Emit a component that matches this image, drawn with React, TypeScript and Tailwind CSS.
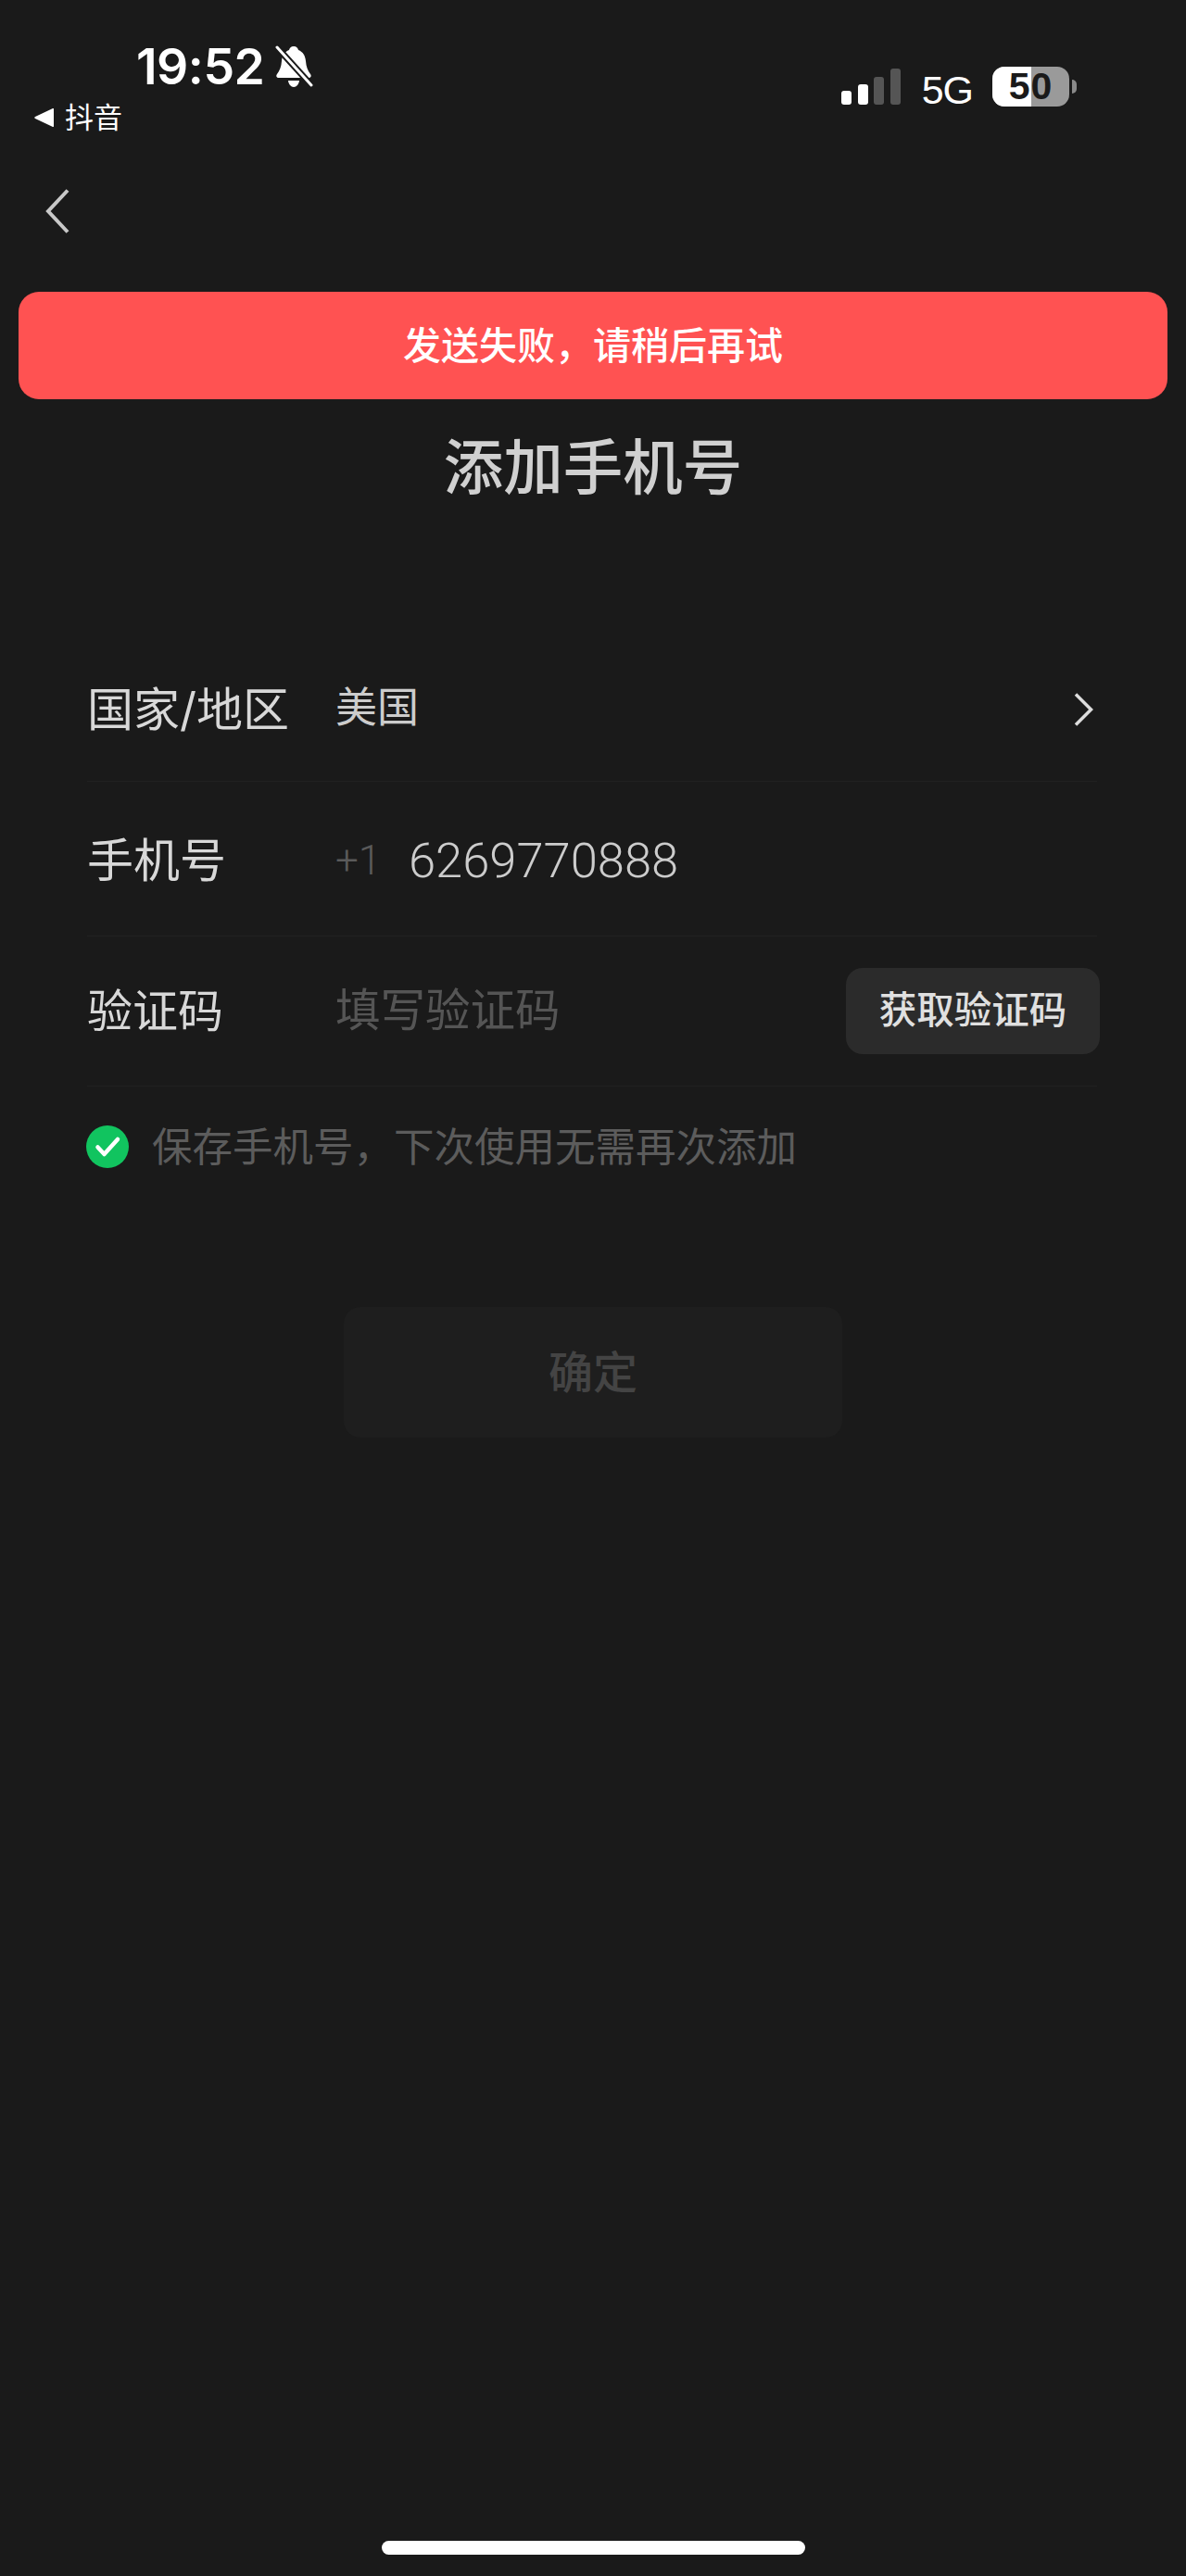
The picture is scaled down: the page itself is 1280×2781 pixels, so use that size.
const sans = 'font-["Inter","Noto_Sans_CJK_SC",sans-serif]';

function BellOff() {
  return (
    <svg width="42" height="46" viewBox="0 0 42 46" className="ml-[11px]">
      <path
        d="M21 1c3 0 4.500 2 5 4 5 2 7.500 6 8 12 .5 6 2 10 5 14 1.500 2 .5 4-2 4H5c-2.500 0-3.500-2-2-4 3-4 4.500-8 5-14 .5-6 3-10 8-12 .5-2 2-4 5-4z"
        fill="#fff"
      />
      <path d="M15 38h12c-.5 4-3 7-6 7s-5.500-3-6-7z" fill="#fff" />
      <path d="M2 1l38 42" stroke="#1a1a1a" strokeWidth="7" />
      <path d="M3 2l37 41" stroke="#fff" strokeWidth="3" strokeLinecap="round" />
    </svg>
  );
}

function Signal() {
  return (
    <div className="flex items-end gap-[6.5px] h-[39px]">
      <div className="w-[11px] h-[15px] rounded-[3px] bg-white" />
      <div className="w-[11px] h-[22px] rounded-[3px] bg-white" />
      <div className="w-[11px] h-[30px] rounded-[3px] bg-[#555555]" />
      <div className="w-[11px] h-[39px] rounded-[3px] bg-[#555555]" />
    </div>
  );
}

function Battery() {
  return (
    <div className="flex items-center">
      <div className="relative w-[83px] h-[43px] rounded-[13px] flex bg-[#9a9a9a]">
        <div className="w-[42px] rounded-l-[13px] bg-white" />
        <span className='absolute inset-0 flex items-center justify-center text-[41px] leading-[43px] font-bold tracking-[1px] text-[#1a1a1a] font-["Liberation_Sans",sans-serif]'>
          50
        </span>
      </div>
      <div className="ml-[3px] w-[5px] h-[15px] rounded-r-full bg-[#8a8a8a]" />
    </div>
  );
}

function Divider() {
  return <div className="h-px ml-[94px] mr-[96px] bg-[#212121]" />;
}

export default function App() {
  return (
    <div className={`w-[1280px] h-[2781px] flex flex-col bg-[#1a1a1a] ${sans}`}>
      {/* status bar */}
      <div className="flex justify-between h-[150px] pl-[37px] pr-[118px]">
        <div className="flex flex-col">
          <div className="flex items-center h-[46px] mt-[49px] ml-[110px]">
            <span className="text-[53.500px] leading-none font-semibold text-white tracking-[-0.5px]">19:52</span>
            <BellOff />
          </div>
          <div className="flex items-center mt-[15px]">
            <svg width="21" height="20" viewBox="0 0 21 20">
              <path d="M21 1v18a1 1 0 0 1-1.500.8L1 11a1.200 1.200 0 0 1 0-2L19.500.2A1 1 0 0 1 21 1z" fill="#fff" />
            </svg>
            <span className="ml-[12px] text-[31px] leading-[34px] text-white">抖音</span>
          </div>
        </div>
        <div className="flex items-end h-[113px]">
          <Signal />
          <span className='ml-[23px] mb-[-6px] text-[43px] leading-[43px] tracking-[-1px] text-white font-["Liberation_Sans",sans-serif]'>5G</span>
          <div className="ml-[21px] mb-[-2px]">
            <Battery />
          </div>
        </div>
      </div>

      <div className="h-[165px] pl-[49px] pt-[54px]">
        <svg width="26" height="48" viewBox="0 0 26 48" fill="none" stroke="#c8c8c8" strokeWidth="4">
          <path d="M24 1.500 3 24l21 22.500" />
        </svg>
      </div>

      {/* toast */}
      <div className="mx-[20px] h-[116px] pt-[2px] rounded-[22px] bg-[#ff5252] flex items-center justify-center text-[41px] font-medium text-white">
        发送失败，请稍后再试
      </div>

      <h1 className="mt-[30px] text-center text-[64.500px] leading-[88px] font-medium text-[#d0d0d0]">添加手机号</h1>

      {/* form */}
      <div className="mt-[140px]">
        <div className="flex items-center h-[154px] pl-[94px] pr-[100px]">
          <span className="w-[268px] text-[50px] text-[#d8d8d8]">国家/地区</span>
          <span className="flex-1 mb-[5px] text-[45px] text-[#cccccc]">美国</span>
          <svg width="21" height="36" viewBox="0 0 21 36" fill="none" stroke="#dddddd" strokeWidth="3.500">
            <path d="M2 1.500 18.500 18 2 34.500" />
          </svg>
        </div>
        <Divider />
        <div className="flex items-center h-[166px] pt-[4px] pl-[94px]">
          <span className="w-[268px] text-[50px] text-[#d8d8d8]">手机号</span>
          <span className='w-[79px] text-[44px] font-light text-[#5a5a5a] font-["Roboto",sans-serif]'>+1</span>
          <span className='text-[52.500px] font-light text-[#cccccc] font-["Roboto",sans-serif]'>6269770888</span>
        </div>
        <Divider />
        <div className="flex items-center h-[161px] pl-[94px] pr-[93px]">
          <span className="w-[268px] text-[49px] text-[#d8d8d8]">验证码</span>
          <span className="flex-1 text-[48.500px] text-[#555555]">填写验证码</span>
          <button className="w-[274px] h-[93px] rounded-[18px] bg-[#2b2b2b] text-[40.500px] font-medium text-[#e0e0e0]">
            获取验证码
          </button>
        </div>
        <Divider />
      </div>

      <div className="flex items-center mt-[42px] pl-[93px]">
        <svg width="46" height="46" viewBox="0 0 46 46">
          <circle cx="23" cy="23" r="23" fill="#11c45f" />
          <path d="M12.500 23.500l7 7.500L34 15" fill="none" stroke="#fff" strokeWidth="4.500" strokeLinecap="round" strokeLinejoin="round" />
        </svg>
        <span className="ml-[25px] text-[43.500px] leading-[46px] text-[#5c5c5c]">保存手机号，下次使用无需再次添加</span>
      </div>

      <button className="self-center mt-[150px] w-[538px] h-[141px] rounded-[18px] bg-[#1e1e1e] text-[48px] font-medium text-[#444444]">
        确定
      </button>

      <div className="mt-auto mb-[23px] self-center w-[457px] h-[15px] rounded-full bg-white" />
    </div>
  );
}
